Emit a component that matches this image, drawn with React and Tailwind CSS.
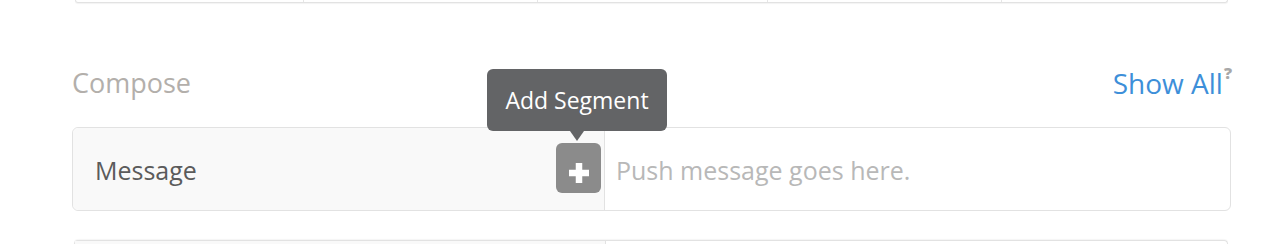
import React from 'react';

const font = { fontFamily: '"Open Sans", "Noto Sans", sans-serif' };

const App = () => {
  return (
    <div className="relative w-[1274px] h-[244px] bg-white overflow-hidden" style={font}>
      {/* bottom edge of the card above */}
      <div className="ml-[75px] w-[1153px] h-[3px] grid grid-cols-[227px_234px_230px_234px_1fr] border-x border-b border-[#e2e2e2] rounded-b-[4px] shadow-[0_1px_1px_rgba(0,0,0,0.05)]">
        <div />
        <div className="border-l border-[#e6e6e6]" />
        <div className="border-l border-[#e6e6e6]" />
        <div className="border-l border-[#e6e6e6]" />
        <div className="border-l border-[#e6e6e6]" />
      </div>

      <div className="mt-[65px] ml-[72px] w-[1160px] flex items-center justify-between h-[30px]">
        <span className="text-[27px] leading-[30px] text-[#b3afab]">Compose</span>
        <span className="flex items-start text-[28px] leading-[30px] text-[#3d8fd9]">
          Show All
          <span className="text-[16px] leading-[16px] font-extrabold text-[#a8a8a8] ml-[1px] mt-[-3px]">?</span>
        </span>
      </div>

      <div className="relative mt-[29px] ml-[72px] w-[1159px] h-[84px] flex border border-[#e2e2e2] rounded-[6px]">
        <div className="w-[532px] flex items-center justify-between bg-[#f9f9f9] rounded-l-[6px] border-r border-[#e2e2e2] pl-[22px] pr-[3px]">
          <span className="text-[25px] leading-[30px] pt-[2px] text-[#5b5b5b]">Message</span>
          <button className="w-[45px] h-[50px] mt-[-2px] rounded-[6px] bg-[#8b8b8b] flex items-center justify-center pt-[10px]">
            <svg className="shrink-0" width="20" height="20" viewBox="0 0 20 20">
              <path d="M10 0v20M0 10h20" stroke="white" strokeWidth="6.5" />
            </svg>
          </button>
        </div>
        <div className="flex-1 flex items-center pl-[11px]">
          <span className="text-[25px] leading-[30px] pt-[1px] text-[#b8b8b8]">Push message goes here.</span>
        </div>
      </div>

      <div className="mt-[29px] ml-[74px] w-[1154px] h-[20px] grid grid-cols-[530px_1fr] border-x border-t border-[#e2e2e2] rounded-t-[4px] shadow-[0_-1px_1px_rgba(0,0,0,0.04)]">
        <div className="bg-[#f9f9f9]" />
        <div className="border-l border-[#e2e2e2]" />
      </div>

      {/* tooltip */}
      <div className="absolute left-[487px] top-[69px] w-[180px] h-[62px] rounded-[6px] bg-[#636466] flex items-center justify-center">
        <span className="text-[23px] leading-[30px] text-white">Add Segment</span>
        <div className="absolute left-1/2 -translate-x-1/2 top-full w-0 h-0 border-l-[7px] border-r-[7px] border-t-[10px] border-l-transparent border-r-transparent border-t-[#636466]" />
      </div>
    </div>
  );
};

export default App;
